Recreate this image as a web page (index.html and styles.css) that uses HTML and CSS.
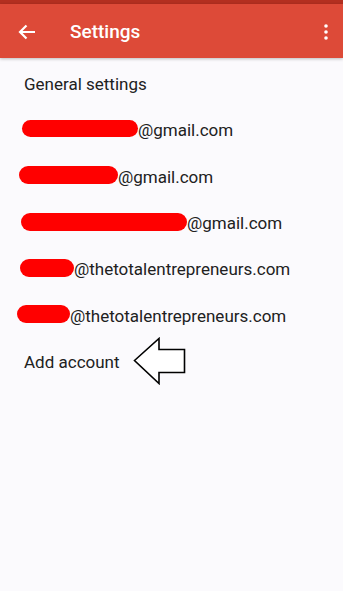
FILE: index.html
```html
<!DOCTYPE html>
<html>
<head>
<meta charset="utf-8">
<link rel="stylesheet" href="styles.css">
</head>
<body>
<div class="status"></div>
<header class="appbar">
  <svg class="back" width="18" height="16" viewBox="0 0 18 16"><path d="M17 8H2M8.5 1.5L2 8l6.5 6.5" fill="none" stroke="#fff" stroke-width="2.2"/></svg>
  <span class="title">Settings</span>
  <svg class="more" width="4" height="16" viewBox="0 0 4 16"><circle cx="2" cy="2" r="1.8" fill="#fff"/><circle cx="2" cy="8" r="1.8" fill="#fff"/><circle cx="2" cy="14" r="1.8" fill="#fff"/></svg>
</header>
<main class="list">
  <div class="row"><span class="label">General settings</span></div>
  <div class="row"><span class="blob b1"></span><span>@gmail.com</span></div>
  <div class="row"><span class="blob b2"></span><span>@gmail.com</span></div>
  <div class="row"><span class="blob b3"></span><span>@gmail.com</span></div>
  <div class="row"><span class="blob b4"></span><span>@thetotalentrepreneurs.com</span></div>
  <div class="row"><span class="blob b5"></span><span>@thetotalentrepreneurs.com</span></div>
  <div class="row"><span class="label">Add account</span>
    <svg class="pointer" width="54" height="48" viewBox="0 0 54 48"><path d="M1.5 23.5L26 1.5V12.5H51.5V35.5H26V46.5Z" fill="#fff" stroke="#000" stroke-width="1.6" stroke-linejoin="miter"/></svg>
  </div>
</main>
</body>
</html>
```
FILE: styles.css
```css
html, body {
  margin: 0;
  padding: 0;
}
body {
  width: 343px;
  height: 591px;
  background: #fbfafd;
  font-family: Roboto, "Noto Sans", sans-serif;
  color: #212121;
  overflow: hidden;
}
.status {
  height: 4px;
  background: #b32f20;
}
.appbar {
  height: 54px;
  background: #dd4a38;
  display: flex;
  align-items: center;
  box-shadow: 0 1px 3px rgba(0,0,0,0.25);
  position: relative;
}
.back {
  margin-left: 18px;
  margin-top: 1px;
}
.title {
  margin-left: 34px;
  color: #fff;
  font-size: 19px;
  font-weight: 500;
  flex: 1;
  margin-top: 1px;
}
.more {
  margin-right: 15px;
  margin-top: 1px;
}
.list {
  padding-top: 3px;
}
.row {
  height: 46.33px;
  display: flex;
  align-items: center;
  font-size: 17px;
  line-height: 20px;
}
.label {
  margin-left: 24px;
}
.blob {
  display: inline-block;
  height: 18px;
  border-radius: 9px;
  background: #ff0000;
  margin-top: -3px;
}
.b1 { margin-left: 22px; width: 116px; height: 17px; }
.b2 { margin-left: 19px; width: 99px; }
.b3 { margin-left: 21px; width: 166px; }
.b4 { margin-left: 20px; width: 54px; }
.b5 { margin-left: 17px; width: 53px; }
.pointer {
  margin-left: 13px;
  margin-top: -2px;
}
```
